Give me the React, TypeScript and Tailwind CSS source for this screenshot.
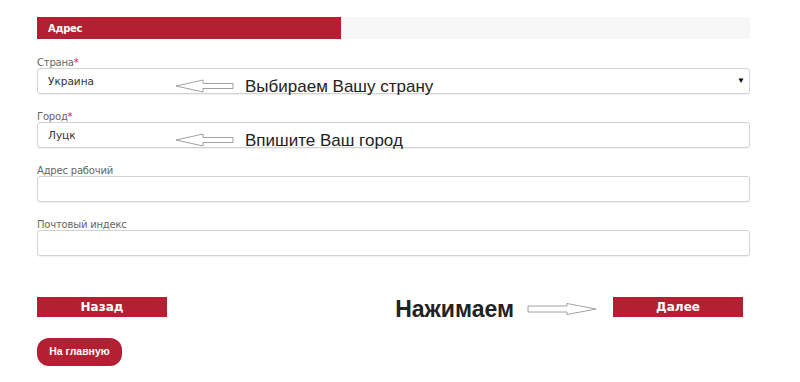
import React from 'react'

const RED = 'bg-[#b31f33]'

function ArrowLeft() {
  return (
    <svg width="60" height="14" viewBox="0 0 60 14" className="block">
      <path
        d="M1 7 L28 1 L28 4.5 L58 4.5 L58 9.5 L28 9.5 L28 13 Z"
        fill="#fff"
        stroke="#8a8a8a"
        strokeWidth="0.8"
      />
    </svg>
  )
}

function ArrowRight() {
  return (
    <svg width="70" height="12" viewBox="0 0 70 12" className="block">
      <path
        d="M69 6 L40 0.5 L40 3 L1 3 L1 9 L40 9 L40 11.5 Z"
        fill="#fff"
        stroke="#8a8a8a"
        strokeWidth="0.8"
      />
    </svg>
  )
}

function Field({
  label,
  required,
  value,
  select,
  note,
}: {
  label: string
  required?: boolean
  value?: string
  select?: boolean
  note?: string
}) {
  return (
    <div className="flex flex-col">
      <label className="h-[11px] text-[10px] leading-[11px] text-[#666] font-['DejaVu_Sans',sans-serif] tracking-[-0.2px]">
        {label}
        {required && <span className="text-[#d0263a]">*</span>}
      </label>
      <div className="relative h-[26px] w-full rounded-[3px] border border-[#d2d2d2] bg-white shadow-[0_1px_1px_rgba(0,0,0,0.06)]">
        <span className="absolute left-[10px] top-[6px] text-[10.5px] leading-[13px] text-[#333] font-['DejaVu_Sans',sans-serif]">
          {value}
        </span>
        {select && (
          <span className="absolute right-[4px] top-[5px] text-[8px] text-black">▼</span>
        )}
        {note && (
          <div className="absolute left-[137px] top-[5px] flex items-center gap-[10px]">
            <ArrowLeft />
            <span className="text-[17px] leading-[20px] text-[#222] font-['Liberation_Sans',Arial,sans-serif] mt-[3px]">
              {note}
            </span>
          </div>
        )}
      </div>
    </div>
  )
}

export default function App() {
  return (
    <div className="w-[800px] h-[382px] bg-white pl-[37px] pt-[17px] overflow-hidden">
      <div className="w-[713px]">
        {/* Tab bar */}
        <div className="flex h-[22px]">
          <div className={`w-[304px] ${RED} flex items-center pl-[11px]`}>
            <span className="text-white text-[10px] font-bold font-['DejaVu_Sans',sans-serif] tracking-[-0.3px]">
              Адрес
            </span>
          </div>
          <div className="flex-1 bg-[#f7f7f7]" />
        </div>

        <div className="mt-[18px] flex flex-col gap-[17px]">
          <Field label="Страна" required value="Украина" select note="Выбираем Вашу страну" />
          <Field label="Город" required value="Луцк" note="Впишите Ваш город" />
          <Field label="Адрес рабочий" />
          <Field label="Почтовый индекс" />
        </div>

        {/* Buttons */}
        <div className="mt-[41px] flex items-center h-[20px]">
          <button className={`w-[130px] h-[20px] ${RED} text-white text-[12px] font-bold font-['DejaVu_Sans',sans-serif]`}>
            Назад
          </button>
          <div className="ml-auto flex items-center">
            <span className="text-[23px] font-bold text-[#222] font-['Liberation_Sans',Arial,sans-serif] mt-[4px]">
              Нажимаем
            </span>
            <div className="ml-[13px] mr-[16px] mt-[3px]">
              <ArrowRight />
            </div>
            <button className={`w-[130px] h-[20px] ${RED} text-white text-[12px] font-bold font-['DejaVu_Sans',sans-serif]`}>
              Далее
            </button>
          </div>
          <div className="w-[7px]" />
        </div>

        <button className={`mt-[21px] w-[85px] h-[28px] rounded-[12px] ${RED} text-white text-[10.5px] font-bold font-['Liberation_Sans',Arial,sans-serif]`}>
          На главную
        </button>
      </div>
    </div>
  )
}
